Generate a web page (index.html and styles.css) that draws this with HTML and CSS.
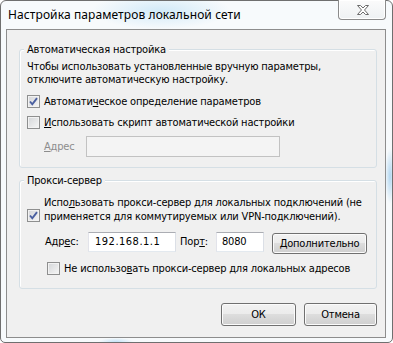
FILE: index.html
```html
<!DOCTYPE html>
<html lang="ru">
<head>
	<meta charset="UTF-8">
	<title>Настройка параметров локальной сети</title>
	<link rel="stylesheet" href="styles.css">
</head>
<body>
	<div class="window">
		<div class="titlebar">
			<span class="title">Настройка параметров локальной сети</span>
			<button class="close">
				<svg width="12" height="10" viewBox="0 0 12 10"><path d="M0.5 0.5H3.5L6 3L8.5 0.5H11.5L7.5 5L11.5 9.5H8.5L6 7L3.5 9.5H0.5L4.5 5Z" fill="#fff" stroke="#6b6b6b" stroke-width="1" stroke-linejoin="round"/></svg>
			</button>
		</div>
		<div class="client">
			<fieldset class="group group-auto">
				<legend>Автоматическая настройка</legend>
				<p class="note">Чтобы использовать установленные вручную параметры,<br>отключите автоматическую настройку.</p>
				<label class="check check-first"><span class="box"><svg width="11" height="11" viewBox="0 0 11 11"><path d="M2 5.5L4.3 8.3L9 2.2" fill="none" stroke="#4a5fa0" stroke-width="1.9"/></svg></span><span>Автомати<u>ч</u>еское определение параметров</span></label>
				<label class="check check-second"><span class="box"></span><span><u>И</u>спользовать скрипт автоматической настройки</span></label>
				<div class="field-row row-script">
					<span class="field-label label-script disabled"><u>А</u>дрес</span>
					<span class="input input-script"></span>
				</div>
			</fieldset>
			<fieldset class="group group-proxy">
				<legend>Прокси-сервер</legend>
				<label class="check check-multi"><span class="box"><svg width="11" height="11" viewBox="0 0 11 11"><path d="M2 5.5L4.3 8.3L9 2.2" fill="none" stroke="#4a5fa0" stroke-width="1.9"/></svg></span><span>Испо<u>л</u>ьзовать прокси-сервер для локальных подключений (не<br>применяется для коммутируемых или VPN-подключений).</span></label>
				<div class="field-row row-proxy">
					<span class="field-label label-addr">Адр<u>е</u>с:</span>
					<span class="input input-addr">192.168.1.1</span>
					<span class="field-label label-port">Пор<u>т</u>:</span>
					<span class="input input-port">8080</span>
					<button class="btn btn-adv"><u>Д</u>ополнительно</button>
				</div>
				<label class="check check-local"><span class="box"></span><span>Не использо<u>в</u>ать прокси-сервер для локальных адресов</span></label>
			</fieldset>
			<div class="actions">
				<button class="btn btn-ok">ОК</button>
				<button class="btn btn-cancel">Отмена</button>
			</div>
		</div>
	</div>
</body>
</html>
```

FILE: styles.css
```css
*{
	margin:0;
	padding:0;
	box-sizing: border-box;
}
body{
	font-family: "DejaVu Sans Condensed", "DejaVu Sans", sans-serif;
	font-stretch: condensed;
	font-size: 11px;
	letter-spacing: -0.18px;
	color: #000;
	background: #fff;
}
.window{
	width: 393px;
	height: 343px;
	border: 1px solid #6f6f6f;
	border-radius: 6px 6px 5px 5px;
	display: flex;
	flex-direction: column;
	background:
		radial-gradient(ellipse 70px 18px at 160px 10px, rgba(190,225,246,.65), rgba(190,225,246,0)),
		radial-gradient(ellipse 5px 28px at 389px 175px, rgba(150,200,236,.7), rgba(150,200,236,0)),
		radial-gradient(ellipse 18px 4px at 115px 341px, rgba(170,215,245,.7), rgba(170,215,245,0)),
		#f7fafc;
}
.titlebar{
	height: 28px;
	display: flex;
	align-items: flex-start;
	padding-left: 7px;
}
.title{
	font-family: "Noto Sans", "Open Sans", sans-serif;
	font-size: 12px;
	letter-spacing: 0.1px;
	line-height: 28px;
	color: #000;
}
.close{
	margin-left: auto;
	margin-right: 6px;
	margin-top: -1px;
	width: 48px;
	height: 20px;
	border: 1px solid #8b8b8b;
	border-top: none;
	border-radius: 0 0 4px 4px;
	background: linear-gradient(#fbfbfb, #eef1f3);
	box-shadow: inset 0 0 0 1px #fff;
	display: flex;
	align-items: center;
	justify-content: center;
	padding-left: 2px;
	padding-top: 1px;
}
.client{
	margin: 0 6px 0 5px;
	height: 309px;
	border: 1px solid #8d8d8d;
	background: #f0f0f0;
	padding: 13px 8px 0 12px;
}
.group{
	border: 1px solid #d5dfe5;
	border-radius: 3px;
	box-shadow: inset 1px 1px 0 #fff;
	padding: 4px 4px 10px 7px;
	line-height: 13px;
}
.group legend{
	padding: 0 3px;
	margin-left: -3px;
	line-height: 13px;
	background: #f0f0f0;
}
.group-proxy{
	margin-top: 6px;
	padding-top: 9px;
	padding-bottom: 13px;
}
.note{
	line-height: 13px;
	white-space: nowrap;
}
.check{
	display: flex;
	align-items: flex-start;
	gap: 4px;
	line-height: 13px;
	white-space: nowrap;
}
.box{
	flex: none;
	width: 13px;
	height: 13px;
	border: 1px solid #8e8f8f;
	background: linear-gradient(135deg, #d3d5d8, #f6f6f6);
	box-shadow: inset 0 0 0 1px #f2f2f2;
	display: flex;
	align-items: center;
	justify-content: center;
}
.check-first{
	margin-top: 9px;
}
.check-second{
	margin-top: 8px;
}
.check-multi{
	line-height: 14px;
}
.check-multi .box{
	margin-top: 13px;
}
.check-local{
	margin-top: 9px;
	margin-left: 20px;
}
.field-row{
	display: flex;
	align-items: center;
	white-space: nowrap;
}
.row-script{
	margin-top: 7px;
	height: 21px;
}
.label-script{
	margin-left: 17px;
	width: 42px;
}
.disabled{
	color: #8d8d8d;
}
.input{
	height: 20px;
	background: #fff;
	border: 1px solid;
	border-color: #abadb3 #dbdfe6 #e3e9ef #e2e3ea;
	line-height: 18px;
}
.input-script{
	width: 194px;
	height: 21px;
	background: #f4f4f4;
	border-color: #c2c2c2;
}
.row-proxy{
	margin-top: 8px;
	height: 21px;
	align-items: flex-start;
}
.row-proxy .field-label{
	line-height: 20px;
}
.label-addr{
	margin-left: 18px;
	width: 43px;
}
.input-addr{
	width: 88px;
	padding-left: 6px;
	letter-spacing: .5px;
}
.label-port{
	margin-left: 4px;
	width: 36px;
}
.input-port{
	width: 48px;
	padding-left: 5px;
}
.btn{
	font-family: inherit;
	font-stretch: inherit;
	font-size: 11px;
	letter-spacing: inherit;
	color: #000;
	border: 1px solid #707070;
	border-radius: 3px;
	background: linear-gradient(#f2f2f2 0%, #ebebeb 50%, #dddddd 50%, #cfcfcf 100%);
	box-shadow: inset 0 0 0 1px #fbfbfb;
	height: 23px;
}
.btn-adv{
	margin-left: 8px;
	margin-top: 1px;
	width: 95px;
	height: 21px;
}
.actions{
	margin-top: 14px;
	display: flex;
	justify-content: flex-end;
	gap: 8px;
}
.btn-ok{
	width: 75px;
}
.btn-cancel{
	width: 73px;
}
```
